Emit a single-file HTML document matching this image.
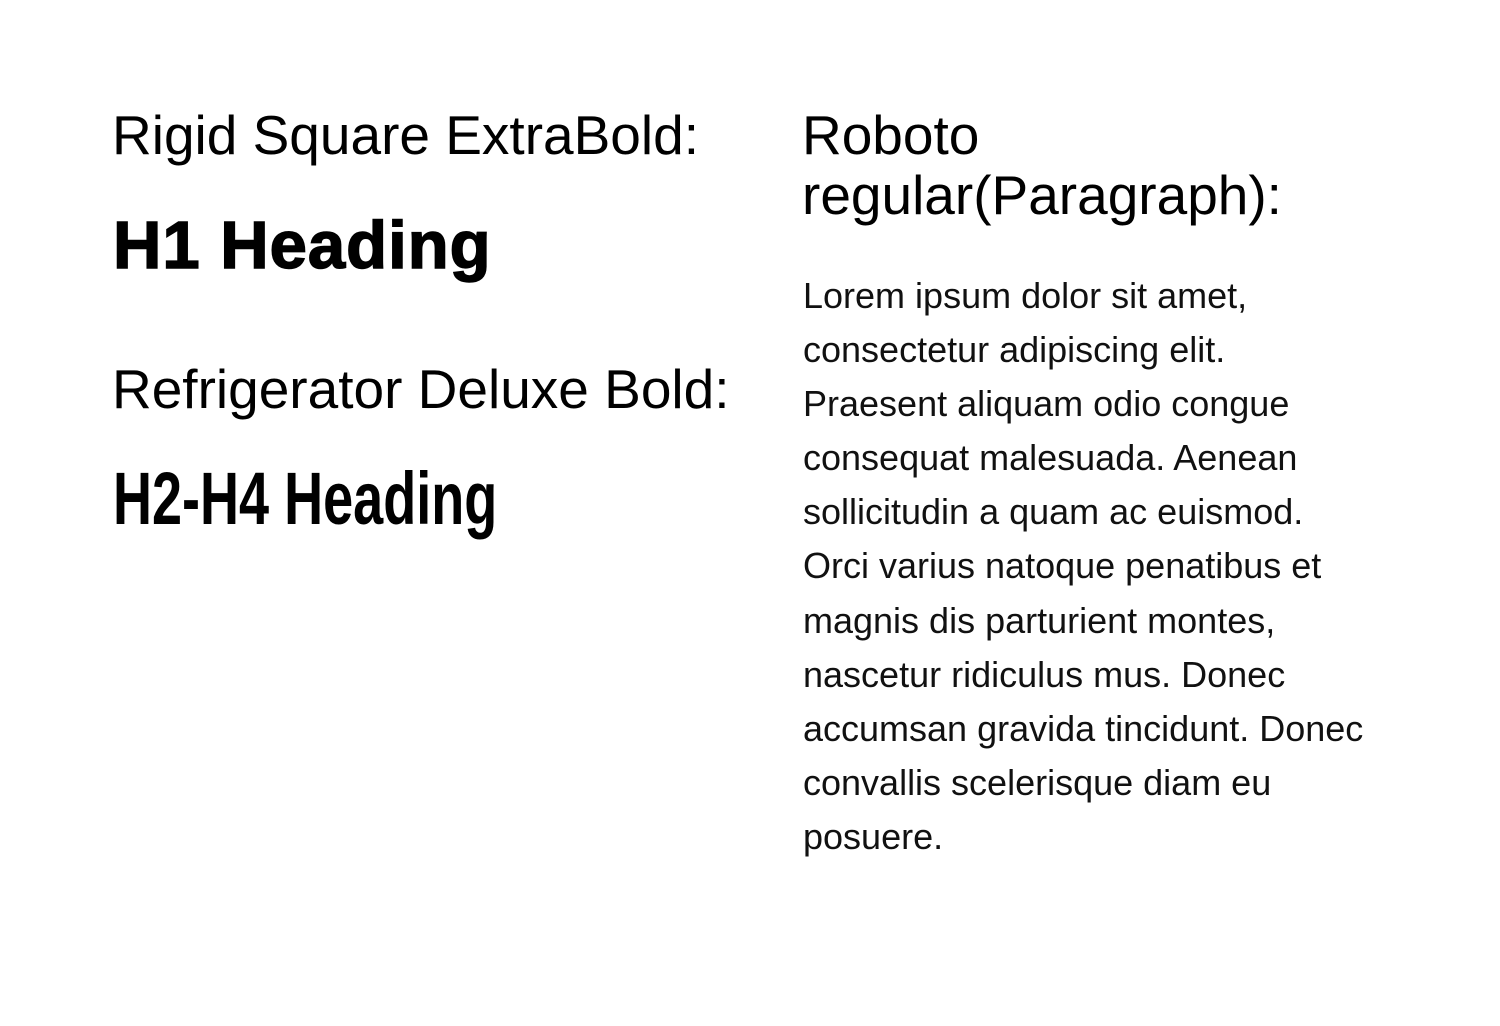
<!DOCTYPE html>
<html><head><meta charset="utf-8"><style>
html,body{margin:0;padding:0;background:#fff;}
body{width:1500px;height:1026px;position:relative;overflow:hidden;font-family:"Liberation Sans",Arial,sans-serif;color:#000;}
.a{position:absolute;white-space:nowrap;}
.lbl{font-size:55px;line-height:60px;}
</style></head><body>
<div class="a lbl" style="left:112px;top:105px;">Rigid Square ExtraBold:</div>
<div class="a" style="left:113px;top:208px;font-size:67px;font-weight:900;letter-spacing:1px;line-height:76px;-webkit-text-stroke:1.5px #000;">H1 Heading</div>
<div class="a lbl" style="left:112px;top:359px;">Refrigerator Deluxe Bold:</div>
<div class="a" style="left:113px;top:457px;font-size:74px;font-weight:bold;line-height:84px;transform:scaleX(0.73);transform-origin:0 0;">H2-H4 Heading</div>
<div class="a lbl" style="left:802px;top:105px;">Roboto<br>regular(Paragraph):</div>
<div class="a" style="left:803px;top:269px;font-size:36px;line-height:54.1px;color:#111;">Lorem ipsum dolor sit amet,<br>consectetur adipiscing elit.<br>Praesent aliquam odio congue<br>consequat malesuada. Aenean<br>sollicitudin a quam ac euismod.<br>Orci varius natoque penatibus et<br>magnis dis parturient montes,<br>nascetur ridiculus mus. Donec<br>accumsan gravida tincidunt. Donec<br>convallis scelerisque diam eu<br>posuere.</div>
</body></html>
